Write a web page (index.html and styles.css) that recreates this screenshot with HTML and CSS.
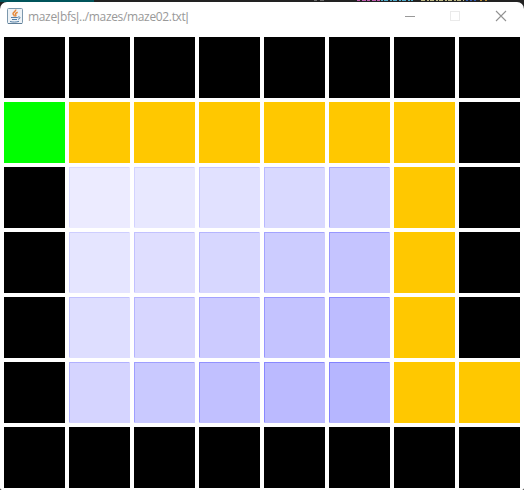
FILE: index.html
```
<!DOCTYPE html>
<html lang="en">
<head>
<meta charset="utf-8">
<title>maze|bfs|../mazes/maze02.txt|</title>
<link rel="stylesheet" href="styles.css">
</head>
<body>
<div class="backdrop"><svg width="524" height="3" shape-rendering="crispEdges"><path fill="#00545b" d="M0 0h94v2H0z"/><path fill="#6b6b6b" d="M314 0h3v1h-3zM320 0h4v1h-4z"/><path stroke="#c05cb0" stroke-dasharray="3 2 4 1" d="M357 .5h24"/><path stroke="#4fa9c9" stroke-dasharray="2 1 4 2" d="M381 .5h32"/><path stroke="#bdb784" stroke-dasharray="4 2 2 1" d="M421 .5h43"/><path stroke="#3159b0" stroke-dasharray="2 2" d="M466 .5h12"/><path stroke="#b58a35" stroke-dasharray="2 3" d="M480 .5h9"/></svg></div>
<main class="window">
<header class="titlebar">
<svg class="java" width="16" height="16" viewBox="0 0 16 16" fill="none"><rect x=".5" y=".5" width="15" height="15" rx="1" fill="#edf2f6" stroke="#7c98ad"/><path stroke="#5f7e98" d="M1 15.5h14"/><path stroke="#e58a3c" stroke-width="1.5" d="M8.7 1.5c.8 2-3.2 2.6-2.7 4.4.2.9 1.5 1.3 1.3 2.6M10.7 4.2c-2 .8-2.8 1.6-2 2.5.5.7.1 1.2-.3 1.8"/><path stroke="#537fa6" d="M4 9.5h6.8M5 11.5h5M3 13.5c2.5.8 6.5.8 9-.2M11 9c2.8-.7 2.5 1.8.1 2.3"/></svg>
<span class="title">maze<span class="bar">|</span>bfs<span class="bar">|</span>../mazes/maze02.txt<span class="bar">|</span></span>
<svg class="controls" width="102" height="12" viewBox="0 0 102 12" fill="none"><path stroke="#999" d="M0 6.5h10"/><rect x="45.5" y="1.5" width="9" height="9" stroke="#eaeaea"/><path stroke="#929292" stroke-width="1.1" d="m91 1 10 10m0-10L91 11"/></svg>
</header>
<section class="maze">
<i></i><i></i><i></i><i></i><i></i><i></i><i></i><i></i>
<i class="start"></i><i class="path"></i><i class="path"></i><i class="path"></i><i class="path"></i><i class="path"></i><i class="path"></i><i></i>
<i></i><i class="seen" style="--c:#ecebff;--a:.077"></i><i class="seen" style="--c:#e8e8ff;--a:.091"></i><i class="seen" style="--c:#e1e1ff;--a:.118"></i><i class="seen" style="--c:#d9d9ff;--a:.149"></i><i class="seen" style="--c:#cfcfff;--a:.188"></i><i class="path"></i><i></i>
<i></i><i class="seen" style="--c:#e5e5ff;--a:.102"></i><i class="seen" style="--c:#dfdeff;--a:.128"></i><i class="seen" style="--c:#d7d7ff;--a:.158"></i><i class="seen" style="--c:#ccccff;--a:.200"></i><i class="seen" style="--c:#c5c4ff;--a:.233"></i><i class="path"></i><i></i>
<i></i><i class="seen" style="--c:#dedeff;--a:.130"></i><i class="seen" style="--c:#d7d6ff;--a:.160"></i><i class="seen" style="--c:#cccbff;--a:.202"></i><i class="seen" style="--c:#c4c3ff;--a:.233"></i><i class="seen" style="--c:#bdbcff;--a:.260"></i><i class="path"></i><i></i>
<i></i><i class="seen" style="--c:#d5d4ff;--a:.167"></i><i class="seen" style="--c:#c9c9ff;--a:.212"></i><i class="seen" style="--c:#c1c0ff;--a:.245"></i><i class="seen" style="--c:#bbbaff;--a:.268"></i><i class="seen" style="--c:#b6b6ff;--a:.286"></i><i class="path"></i><i class="path"></i>
<i></i><i></i><i></i><i></i><i></i><i></i><i></i><i></i>
</section>
</main>
</body>
</html>
```
FILE: styles.css
```
body {
  margin: 0;
  width: 524px;
  height: 490px;
  overflow: hidden;
  background: #222;
}
.backdrop {
  height: 2px;
}
.backdrop svg {
  display: block;
}
.window {
  height: 488px;
  background: #fff;
  border-radius: 7px 7px 2px 2px;
}
.titlebar {
  display: flex;
  align-items: center;
  box-sizing: border-box;
  height: 35px;
  padding: 0 17px 7px 7px;
}
.title {
  margin-left: 5px;
  padding-top: 2px;
  font: 12px/16px "Open Sans", "Noto Sans", sans-serif;
  letter-spacing: -0.34px;
  color: #999;
  white-space: nowrap;
}
.bar {
  font-family: "Liberation Sans", sans-serif;
  letter-spacing: 0;
}
.controls {
  margin-left: auto;
}
.maze {
  display: grid;
  grid-template-columns: repeat(8, 61px);
  grid-auto-rows: 61px;
  gap: 4px;
  padding-left: 4px;
}
.maze i {
  background: #000;
}
.maze .start {
  background: #0f0;
}
.maze .path {
  background: #ffc800;
}
.maze .seen {
  --tint: rgb(0 0 255 / var(--a));
  background:
    linear-gradient(var(--tint), var(--tint)) 0 0 / 60px 1px no-repeat,
    linear-gradient(var(--tint), var(--tint)) 0 1px / 1px 59px no-repeat,
    var(--c);
}
```
